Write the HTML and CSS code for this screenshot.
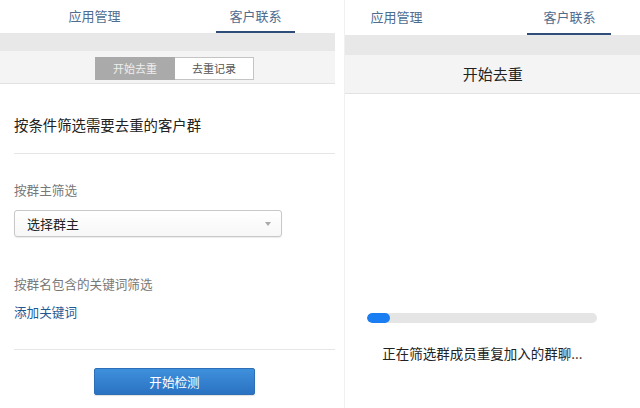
FILE: index.html
```html
<!DOCTYPE html>
<html lang="zh-CN">
<head>
  <meta charset="UTF-8"/>
  <title>客户群去重</title>
  <link rel="stylesheet" href="styles.css">
</head>
<body>
  <div class="screens">

    <!-- Left screen: filter form -->
    <div class="panel panel-left">
      <div class="tabs">
        <div class="tab">应用管理</div>
        <div class="tab active">客户联系</div>
      </div>
      <div class="band"></div>
      <div class="seg-bar">
        <div class="seg">
          <div class="seg-item on">开始去重</div>
          <div class="seg-item">去重记录</div>
        </div>
      </div>

      <div class="form">
        <div class="form-title">按条件筛选需要去重的客户群</div>
        <div class="rule"></div>

        <div class="label">按群主筛选</div>
        <div class="select">
          <span>选择群主</span>
          <span class="caret"></span>
        </div>

        <div class="label label-kw">按群名包含的关键词筛选</div>
        <a class="link">添加关键词</a>

        <div class="rule rule-bottom"></div>
        <button class="btn">开始检测</button>
      </div>
    </div>

    <!-- Right screen: progress -->
    <div class="panel panel-right">
      <div class="tabs">
        <div class="tab">应用管理</div>
        <div class="tab active">客户联系</div>
      </div>
      <div class="band"></div>
      <div class="title-bar">开始去重</div>

      <div class="progress-wrap">
        <div class="progress"><div class="progress-fill" style="width:23px"></div></div>
        <div class="progress-text">正在筛选群成员重复加入的群聊...</div>
      </div>
    </div>

  </div>
</body>
</html>
```

FILE: styles.css
```css
body {
  margin:0; padding:0;
  background:#fff;
  font-family:"Noto Sans CJK SC","Noto Sans",sans-serif;
  color:#333;
}
.screens { display:flex; gap:9px; width:640px; height:408px; overflow:hidden; }
.panel { background:#fff; height:408px; }
.panel-left { width:336px; }
.panel-right { width:295px; border-left:1px solid #f0f0f0; }

/* Top tabs */
.tabs { display:flex; height:33px; }
.tab {
  font-size:13px; color:#4f6d8f; text-align:center;
  line-height:31px; height:31px;
}
.tab.active { border-bottom:2px solid #2e4d78; }
.panel-left .tab { width:79px; }
.panel-left .tab:first-child { margin-left:55px; margin-right:82px; }
.panel-right .tabs { height:35px; }
.panel-right .tab { line-height:33px; height:33px; }
.panel-right .tab:first-child { width:70px; margin-left:16px; margin-right:96px; }
.panel-right .tab.active { width:84px; }

.band { height:18px; background:#e8e8e9; }
.panel-right .band { height:20px; }

/* Segmented control */
.seg-bar {
  height:32px; background:#f4f4f4;
  border-bottom:1px solid #e2e2e2;
  display:flex; align-items:center;
}
.seg { display:flex; margin-left:95px; margin-top:3px; }
.seg-item {
  width:78px; height:21px; line-height:21px;
  font-size:11px; text-align:center;
  border:1px solid #c4c4c4; color:#555; background:#fff;
}
.seg-item.on { background:#aaa; border-color:#aaa; color:#eee; }
.seg-item + .seg-item { border-left:none; }

/* Form */
.form { padding-left:14px; }
.form-title { font-size:14.4px; line-height:20px; margin-top:31px; color:#222; }
.rule { height:1px; background:#e6e6e6; margin-top:18px; }
.label { font-size:12.6px; line-height:18px; color:#777; margin-top:27px; }
.label-kw { margin-top:38px; }
.select {
  height:25px; margin-top:11px;
  border:1px solid #c8c8c8; border-radius:3px;
  background:linear-gradient(#fff,#f7f7f7);
  box-shadow:0 1px 1px rgba(0,0,0,0.08);
  display:flex; align-items:center; justify-content:space-between;
  padding:0 10px 0 12px;
  width:244px;
  font-size:13px; color:#222;
}
.caret {
  width:0; height:0;
  border-left:3px solid transparent; border-right:3px solid transparent;
  border-top:4px solid #aaa;
}
.link {
  display:block; font-size:12.6px; line-height:18px;
  color:#1e5996; margin-top:10px; cursor:pointer;
}
.rule-bottom { margin-top:28px; }
.btn {
  display:block; margin:18px 0 0 80px;
  width:161px; height:27px;
  border:1px solid #2c6fb7; border-radius:2px;
  background:linear-gradient(#3f90dc,#2a72c2);
  color:#fff; font-family:inherit; font-size:12.6px;
  box-shadow:0 1px 1px rgba(0,0,0,0.12);
  padding:0;
}

/* Right screen */
.title-bar {
  height:38px; line-height:38px; text-align:center;
  background:#f4f4f4; border-bottom:1px solid #e2e2e2;
  font-size:15px; color:#222;
}
.progress-wrap { width:230px; margin-left:22px; }
.progress {
  margin-top:219px; height:10px; border-radius:5px;
  background:#e5e5e5; overflow:hidden;
}
.progress-fill { height:100%; background:#1a7ef2; border-radius:5px; }
.progress-text {
  margin-top:20px; line-height:20px; font-size:13.5px;
  text-align:center; white-space:nowrap; color:#222;
}
```
